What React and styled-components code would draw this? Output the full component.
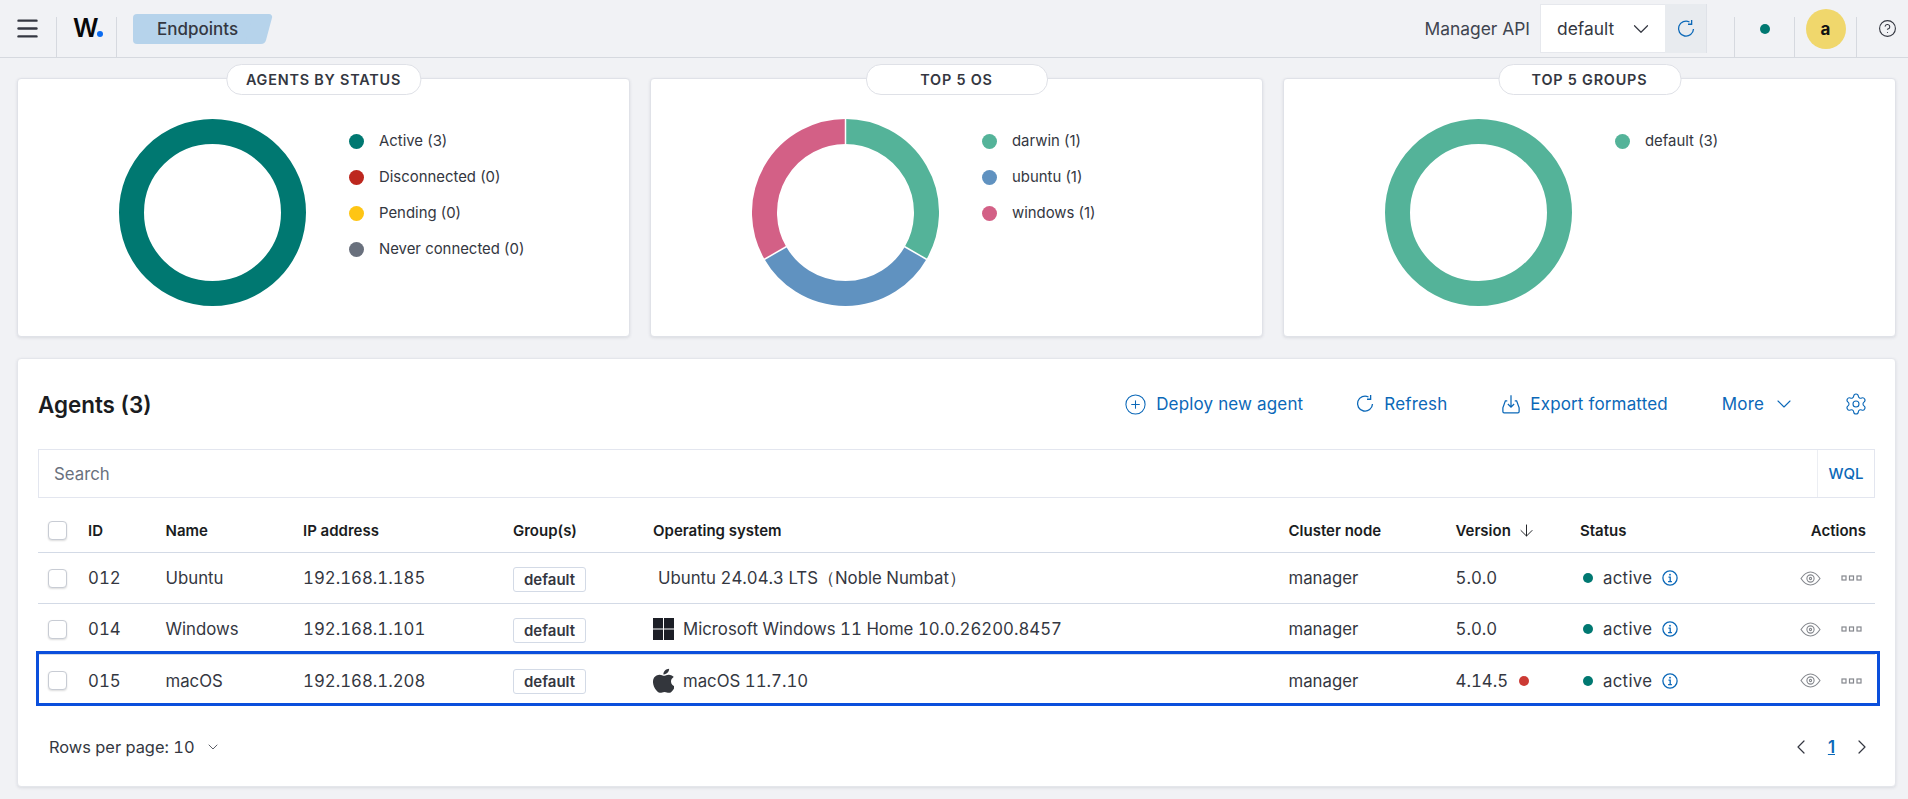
import React from 'react';
import styled, { createGlobalStyle } from 'styled-components';
import { ChevronDown, ChevronLeft, ChevronRight, ArrowDown, CirclePlus, Settings, Menu, CircleHelp } from 'lucide-react';

const GlobalStyle = createGlobalStyle`
  html, body { margin: 0; padding: 0; }
  body {
    background: #f1f2f5;
    color: #343741;
    font-family: Inter, "Liberation Sans", sans-serif;
    font-size: 17px;
  }
`;

const BLUE = '#0b68b8';

const TopBar = styled.header`
  height: 57px;
  display: flex;
  align-items: center;
  border-bottom: 1px solid #d6d9df;
`;

const BurgerCell = styled.div`
  width: 56px;
  padding-left: 14px;
  box-sizing: border-box;
  display: flex;
  color: #343741;
`;

const HeadDivider = styled.span`
  width: 1px;
  height: 40px;
  align-self: flex-end;
  background: #d6d9df;
`;

const LogoCell = styled.div`
  width: 59px;
  padding-left: 16px;
  box-sizing: border-box;
  font-size: 25px;
  font-weight: 600;
  color: #07080a;
  display: flex;
  align-items: baseline;
  margin-top: -2px;
`;

const LogoDot = styled.i`
  width: 6px;
  height: 6px;
  margin-left: -2px;
  border-radius: 50%;
  background: #0b6bf0;
`;

const Crumb = styled.div`
  position: relative;
  margin-left: 16px;
  width: 128px;
  height: 30px;
  display: flex;
  align-items: center;
  padding-left: 24px;
  box-sizing: border-box;
  background: #b6d3eb;
  border-radius: 4px 0 0 4px;
  font-size: 17px;
  font-weight: 500;
  color: #343741;

  &::after {
    content: '';
    position: absolute;
    top: 0;
    bottom: 0;
    right: -8px;
    width: 20px;
    background: #b6d3eb;
    border-radius: 0 4px 4px 0;
    transform: skewX(-15deg);
  }
`;

const HeadRight = styled.div`
  margin-left: auto;
  height: 100%;
  display: flex;
  align-items: center;
`;

const ApiLabel = styled.span`
  font-size: 17.4px;
  color: #3f4550;
  margin-right: 10px;
`;

const ApiSelect = styled.div`
  width: 125px;
  height: 49px;
  padding: 0 11px 0 16px;
  box-sizing: border-box;
  background: #fff;
  border: 1px solid #e6e8ed;
  border-right: 0;
  display: flex;
  align-items: center;
  justify-content: space-between;
  font-size: 17.4px;
  color: #343741;
`;

const ApiRefresh = styled.div`
  width: 42px;
  height: 49px;
  background: #e8ebef;
  color: ${BLUE};
  display: flex;
  align-items: center;
  justify-content: center;
  border-right: 1px solid #dfe2e8;
  box-sizing: border-box;
`;

const HeadSpacer = styled.div`
  width: ${p => p.$w}px;
  padding-left: ${p => p.$pad || 0}px;
  box-sizing: border-box;
  display: flex;
  align-items: center;
  justify-content: center;
`;

const StatusDot = styled.span`
  width: ${p => p.$size || 10}px;
  height: ${p => p.$size || 10}px;
  border-radius: 50%;
  background: ${p => p.$color};
  flex: none;
`;

const Avatar = styled.div`
  width: 40px;
  height: 40px;
  border-radius: 50%;
  background: #f0d76c;
  color: #111;
  font-size: 17px;
  font-weight: 700;
  display: flex;
  align-items: center;
  justify-content: center;
`;

const Page = styled.main`
  padding: 20px 12px 12px 17px;
`;

const Cards = styled.section`
  display: grid;
  grid-template-columns: repeat(3, 1fr);
  gap: 20px;
`;

const Card = styled.article`
  position: relative;
  height: 259px;
  box-sizing: border-box;
  padding: 40px 0 0 101px;
  display: flex;
  background: #fff;
  border: 1px solid #e0e2e8;
  border-radius: 4px;
  box-shadow: 0 1px 3px rgba(50, 60, 80, 0.12);
`;

const CardTitle = styled.h3`
  position: absolute;
  top: -15px;
  left: 50%;
  transform: translateX(-50%);
  margin: 0;
  height: 31px;
  padding: 0 19px;
  display: flex;
  align-items: center;
  box-sizing: border-box;
  min-width: ${p => p.$min}px;
  justify-content: center;
  background: #fff;
  border: 1px solid #dfe1e7;
  border-radius: 15px;
  font-size: 14.4px;
  font-weight: 600;
  letter-spacing: 0.8px;
  color: #343741;
  text-transform: uppercase;
`;

const Legend = styled.ul`
  list-style: none;
  margin: 4px 0 0 43px;
  padding: 0;
`;

const LegendItem = styled.li`
  height: 36px;
  display: flex;
  align-items: center;
  gap: 15px;
  font-size: 14.9px;
  color: #343741;
`;

const Panel = styled.section`
  margin-top: 21px;
  height: 429px;
  box-sizing: border-box;
  padding: 20px 20px 0;
  background: #fff;
  border-radius: 4px;
  border: 1px solid #e4e6eb;
  box-shadow: 0 1px 3px rgba(50, 60, 80, 0.12);
`;

const PanelHead = styled.div`
  height: 50px;
  display: flex;
  align-items: center;
`;

const PanelTitle = styled.h2`
  margin: 0;
  font-size: 22.4px;
  font-weight: 600;
  color: #1a1c21;
`;

const PanelActions = styled.div`
  margin-left: auto;
  padding-right: 7px;
  display: flex;
  align-items: center;
`;

const ActionLink = styled.a`
  display: flex;
  align-items: center;
  gap: ${p => p.$gap || 9}px;
  margin-left: ${p => p.$ml}px;
  font-size: 17px;
  letter-spacing: 0.15px;
  color: ${BLUE};
  cursor: pointer;
`;

const SearchBar = styled.div`
  margin-top: 20px;
  height: 49px;
  box-sizing: border-box;
  border: 1px solid #e3e6ef;
  display: flex;
  align-items: center;
`;

const SearchInput = styled.div`
  flex: 1;
  padding-left: 15px;
  font-size: 16.8px;
  color: #6a717d;
`;

const WqlTag = styled.div`
  width: 57px;
  height: 100%;
  box-sizing: border-box;
  border-left: 1px solid #eceef3;
  display: flex;
  align-items: center;
  justify-content: center;
  font-size: 15px;
  font-weight: 500;
  color: ${BLUE};
`;

const COLUMNS = '50px 77.5px 137.5px 210px 140px 635.5px 167px 124.5px 160px 1fr';

const HeadRow = styled.div`
  display: grid;
  grid-template-columns: ${COLUMNS};
  height: 55px;
  padding-top: 11px;
  box-sizing: border-box;
  align-items: center;
  border-bottom: 1px solid #d3dae6;
  font-size: 15px;
  font-weight: 600;
  color: #1a1c21;
`;

const Row = styled.div`
  position: relative;
  display: grid;
  grid-template-columns: ${COLUMNS};
  height: 51px;
  box-sizing: border-box;
  align-items: center;
  border-bottom: ${p => (p.$highlight ? '0' : '1px solid #d3dae6')};
  font-size: 16.8px;
  font-variant-numeric: tabular-nums;
  color: #343741;

  ${p => p.$highlight && `
    &::after {
      content: '';
      position: absolute;
      top: -4px;
      bottom: 0;
      left: -2px;
      right: -5px;
      border: 3px solid #0b4fdc;
      pointer-events: none;
    }
  `}
`;

const CheckCell = styled.div`
  padding-left: 10px;
  display: flex;
`;

const Check = styled.span`
  width: 19px;
  height: 19px;
  box-sizing: border-box;
  background: #fff;
  border: 1px solid #c8ccd4;
  border-radius: 4px;
  box-shadow: 0 1px 2px rgba(0, 0, 0, 0.14);
`;

const Badge = styled.span`
  display: inline-flex;
  align-items: center;
  height: 25px;
  width: 73px;
  margin-top: 2px;
  justify-content: center;
  box-sizing: border-box;
  border: 1px solid #d3dae6;
  border-radius: 3px;
  font-size: 15px;
  font-weight: 600;
  color: #343741;
`;

const OsCell = styled.div`
  display: flex;
  align-items: center;
  gap: 9px;
  white-space: nowrap;
  padding-left: ${p => p.$indent || 0}px;
`;

const SortHead = styled.div`
  display: flex;
  align-items: center;
  gap: 6px;
`;

const VersionCell = styled.div`
  display: flex;
  align-items: center;
  gap: 11px;
`;

const StatusCell = styled.div`
  display: flex;
  align-items: center;
  padding-left: 3px;
  gap: 10px;
  color: ${BLUE};
`;

const StatusText = styled.span`
  color: #343741;
  letter-spacing: 0.3px;
`;

const ActionsHead = styled.div`
  text-align: right;
  padding-right: 9px;
`;

const ActionsCell = styled.div`
  display: flex;
  justify-content: flex-end;
  align-items: center;
  gap: 20px;
  padding-right: 13px;
  color: #85888e;
`;

const Foot = styled.div`
  display: flex;
  align-items: center;
  justify-content: space-between;
  height: 81px;
  padding: 0 1px 0 11px;
`;

const RowsPerPage = styled.div`
  display: flex;
  align-items: center;
  gap: 10px;
  font-size: 16.4px;
  font-variant-numeric: tabular-nums;
  color: #343741;
`;

const Pager = styled.div`
  display: flex;
  align-items: center;
  gap: 15px;
  color: #343741;
`;

const PageNum = styled.span`
  font-size: 16.8px;
  font-weight: 600;
  color: ${BLUE};
  text-decoration: underline;
`;

// OUI style refresh arrow, the lucide one has the wrong head
const RefreshIcon = ({ size = 20 }) => (
  <svg width={size} height={size} viewBox="0 0 16 16" fill="none" stroke="currentColor" strokeWidth="1.05">
    <path d="M10.8 2.400A6 6 0 1 0 14 8" />
    <path d="M12.500 0.800v3.400H9.600" />
  </svg>
);

const ExportIcon = () => (
  <svg width="20" height="20" viewBox="0 0 16 16" fill="none" stroke="currentColor" strokeWidth="1">
    <path d="M5 5.500H3.500L1.500 11v3a1 1 0 0 0 1 1h11a1 1 0 0 0 1-1v-3L12.500 5.500H11" />
    <path d="M8 1v9.500M5.500 8 8 10.500 10.500 8" />
  </svg>
);

const InfoIcon = () => (
  <svg width="16" height="16" viewBox="0 0 16 16" fill="none" stroke="currentColor" strokeWidth="1.3">
    <circle cx="8" cy="8" r="7.100" />
    <path d="M6.500 7.100h1.700v4.400M6.100 11.600h3.800" />
    <circle cx="8" cy="4.700" r="0.900" fill="currentColor" stroke="none" />
  </svg>
);

const EyeIcon = () => (
  <svg width="21" height="15" viewBox="0 0 21 15" fill="none" stroke="currentColor" strokeWidth="1.100">
    <path d="M1 7.500C4 3 7 1 10.500 1S17 3 20 7.500C17 12 14 14 10.500 14S4 12 1 7.500Z" />
    <circle cx="10.500" cy="7.500" r="3.600" />
    <circle cx="10.500" cy="7.500" r="1.100" />
  </svg>
);

const BoxesIcon = () => (
  <svg width="21" height="6" viewBox="0 0 21 6" fill="none" stroke="currentColor" strokeWidth="1.2">
    <rect x="1" y="1" width="4" height="4" />
    <rect x="8.5" y="1" width="4" height="4" />
    <rect x="16" y="1" width="4" height="4" />
  </svg>
);

const WindowsIcon = () => (
  <svg width="21" height="22" viewBox="0 0 21 22" fill="#1c1e26">
    <rect x="0" y="0" width="10" height="10.500" />
    <rect x="11" y="0" width="10" height="10.500" />
    <rect x="0" y="11.500" width="10" height="10.500" />
    <rect x="11" y="11.500" width="10" height="10.500" />
  </svg>
);

const AppleIcon = () => (
  <svg width="21" height="25" viewBox="2.700 0.900 13.300 18" preserveAspectRatio="none" fill="#33363c">
    <path d="M14.1 10.6c0-2.1 1.7-3.1 1.8-3.2-1-1.4-2.500-1.600-3-1.700-1.300-.1-2.500.8-3.200.8-.7 0-1.700-.8-2.800-.8C5.500 5.700 4.200 6.500 3.400 7.800c-1.500 2.700-.4 6.600 1.100 8.800.7 1.100 1.600 2.300 2.700 2.200 1.100 0 1.500-.7 2.800-.7s1.700.7 2.800.7c1.200 0 1.900-1.100 2.600-2.100.8-1.200 1.200-2.400 1.200-2.500-.1 0-2.500-1-2.500-3.600Z" />
    <path d="M12 4.200c.6-.7 1-1.800.9-2.800-.9 0-2 .6-2.600 1.300-.6.7-1.100 1.800-1 2.800 1 .1 2.100-.5 2.700-1.300Z" />
  </svg>
);

// one ring, sliced in equal parts from twelve o'clock
const Donut = ({ colors }) => {
  const r = 81;
  const c = 93.5;
  const point = a => [c + r * Math.sin(a), c - r * Math.cos(a)];
  if (colors.length === 1) {
    return (
      <svg width="187" height="187" viewBox="0 0 187 187">
        <circle cx={c} cy={c} r={r} fill="none" stroke={colors[0]} strokeWidth="25" />
      </svg>
    );
  }
  const step = (Math.PI * 2) / colors.length;
  return (
    <svg width="187" height="187" viewBox="0 0 187 187">
      {colors.map((color, i) => {
        const [x1, y1] = point(i * step);
        const [x2, y2] = point((i + 1) * step);
        return (
          <path key={color} d={`M${x1} ${y1}A${r} ${r} 0 0 1 ${x2} ${y2}`} fill="none" stroke={color} strokeWidth="25" />
        );
      })}
      {colors.map((color, i) => {
        const a = i * step;
        const inner = [c + 68 * Math.sin(a), c - 68 * Math.cos(a)];
        const outer = [c + 94 * Math.sin(a), c - 94 * Math.cos(a)];
        return <line key={color} x1={inner[0]} y1={inner[1]} x2={outer[0]} y2={outer[1]} stroke="#fff" strokeWidth="1.5" />;
      })}
    </svg>
  );
};

const cards = [
  {
    title: 'Agents by status',
    min: 193,
    ring: ['#007871'],
    legend: [
      ['Active (3)', '#007871'],
      ['Disconnected (0)', '#bd271e'],
      ['Pending (0)', '#fec514'],
      ['Never connected (0)', '#69707d'],
    ],
  },
  {
    title: 'Top 5 OS',
    min: 182,
    ring: ['#54b399', '#6092c0', '#d36086'],
    legend: [
      ['darwin (1)', '#54b399'],
      ['ubuntu (1)', '#6092c0'],
      ['windows (1)', '#d36086'],
    ],
  },
  {
    title: 'Top 5 groups',
    min: 183,
    ring: ['#54b399'],
    legend: [['default (3)', '#54b399']],
  },
];

const agents = [
  { id: '012', name: 'Ubuntu', ip: '192.168.1.185', os: 'Ubuntu 24.04.3 LTS（Noble Numbat）', version: '5.0.0', indent: 5 },
  { id: '014', name: 'Windows', ip: '192.168.1.101', os: 'Microsoft Windows 11 Home 10.0.26200.8457', version: '5.0.0', icon: <WindowsIcon /> },
  { id: '015', name: 'macOS', ip: '192.168.1.208', os: 'macOS 11.7.10', version: '4.14.5', icon: <AppleIcon />, outdated: true, highlight: true },
];

const App = () => (
  <>
    <GlobalStyle />
    <TopBar>
      <BurgerCell><Menu size={27} strokeWidth={2.1} /></BurgerCell>
      <HeadDivider />
      <LogoCell>W<LogoDot /></LogoCell>
      <HeadDivider />
      <Crumb>Endpoints</Crumb>
      <HeadRight>
        <ApiLabel>Manager API</ApiLabel>
        <ApiSelect>default <ChevronDown size={26} strokeWidth={1.1} /></ApiSelect>
        <ApiRefresh><RefreshIcon /></ApiRefresh>
        <HeadSpacer $w={27} />
        <HeadDivider />
        <HeadSpacer $w={59}><StatusDot $color="#007871" /></HeadSpacer>
        <HeadDivider />
        <HeadSpacer $w={61}><Avatar>a</Avatar></HeadSpacer>
        <HeadDivider />
        <HeadSpacer $w={51} $pad={9}><CircleHelp size={19} strokeWidth={1.4} /></HeadSpacer>
      </HeadRight>
    </TopBar>
    <Page>
      <Cards>
        {cards.map(card => (
          <Card key={card.title}>
            <CardTitle $min={card.min}>{card.title}</CardTitle>
            <Donut colors={card.ring} />
            <Legend>
              {card.legend.map(([label, color]) => (
                <LegendItem key={label}>
                  <StatusDot $size={15} $color={color} />
                  {label}
                </LegendItem>
              ))}
            </Legend>
          </Card>
        ))}
      </Cards>
      <Panel>
        <PanelHead>
          <PanelTitle>Agents (3)</PanelTitle>
          <PanelActions>
            <ActionLink><CirclePlus size={23} strokeWidth={1.1} />Deploy new agent</ActionLink>
            <ActionLink $ml={52}><RefreshIcon />Refresh</ActionLink>
            <ActionLink $ml={54}><ExportIcon />Export formatted</ActionLink>
            <ActionLink $ml={54} $gap={8}>More <ChevronDown size={24} strokeWidth={1.1} /></ActionLink>
            <ActionLink $ml={48}><Settings size={24} strokeWidth={1.1} /></ActionLink>
          </PanelActions>
        </PanelHead>
        <SearchBar>
          <SearchInput>Search</SearchInput>
          <WqlTag>WQL</WqlTag>
        </SearchBar>
        <HeadRow>
          <CheckCell><Check /></CheckCell>
          <div>ID</div>
          <div>Name</div>
          <div>IP address</div>
          <div>Group(s)</div>
          <div>Operating system</div>
          <div>Cluster node</div>
          <div>
            <SortHead>Version <ArrowDown size={19} strokeWidth={1.2} /></SortHead>
          </div>
          <div>Status</div>
          <ActionsHead>Actions</ActionsHead>
        </HeadRow>
        {agents.map(agent => (
          <Row key={agent.id} $highlight={agent.highlight}>
            <CheckCell><Check /></CheckCell>
            <div>{agent.id}</div>
            <div>{agent.name}</div>
            <div>{agent.ip}</div>
            <div><Badge>default</Badge></div>
            <OsCell $indent={agent.indent}>{agent.icon}{agent.os}</OsCell>
            <div>manager</div>
            <VersionCell>
              {agent.version}
              {agent.outdated && <StatusDot $color="#cc3a34" />}
            </VersionCell>
            <StatusCell>
              <StatusDot $color="#007871" />
              <StatusText>active</StatusText>
              <InfoIcon />
            </StatusCell>
            <ActionsCell>
              <EyeIcon />
              <BoxesIcon />
            </ActionsCell>
          </Row>
        ))}
        <Foot>
          <RowsPerPage>Rows per page: 10 <ChevronDown size={16} strokeWidth={1.2} /></RowsPerPage>
          <Pager>
            <ChevronLeft size={24} strokeWidth={1.2} />
            <PageNum>1</PageNum>
            <ChevronRight size={24} strokeWidth={1.2} />
          </Pager>
        </Foot>
      </Panel>
    </Page>
  </>
);

export default App;
